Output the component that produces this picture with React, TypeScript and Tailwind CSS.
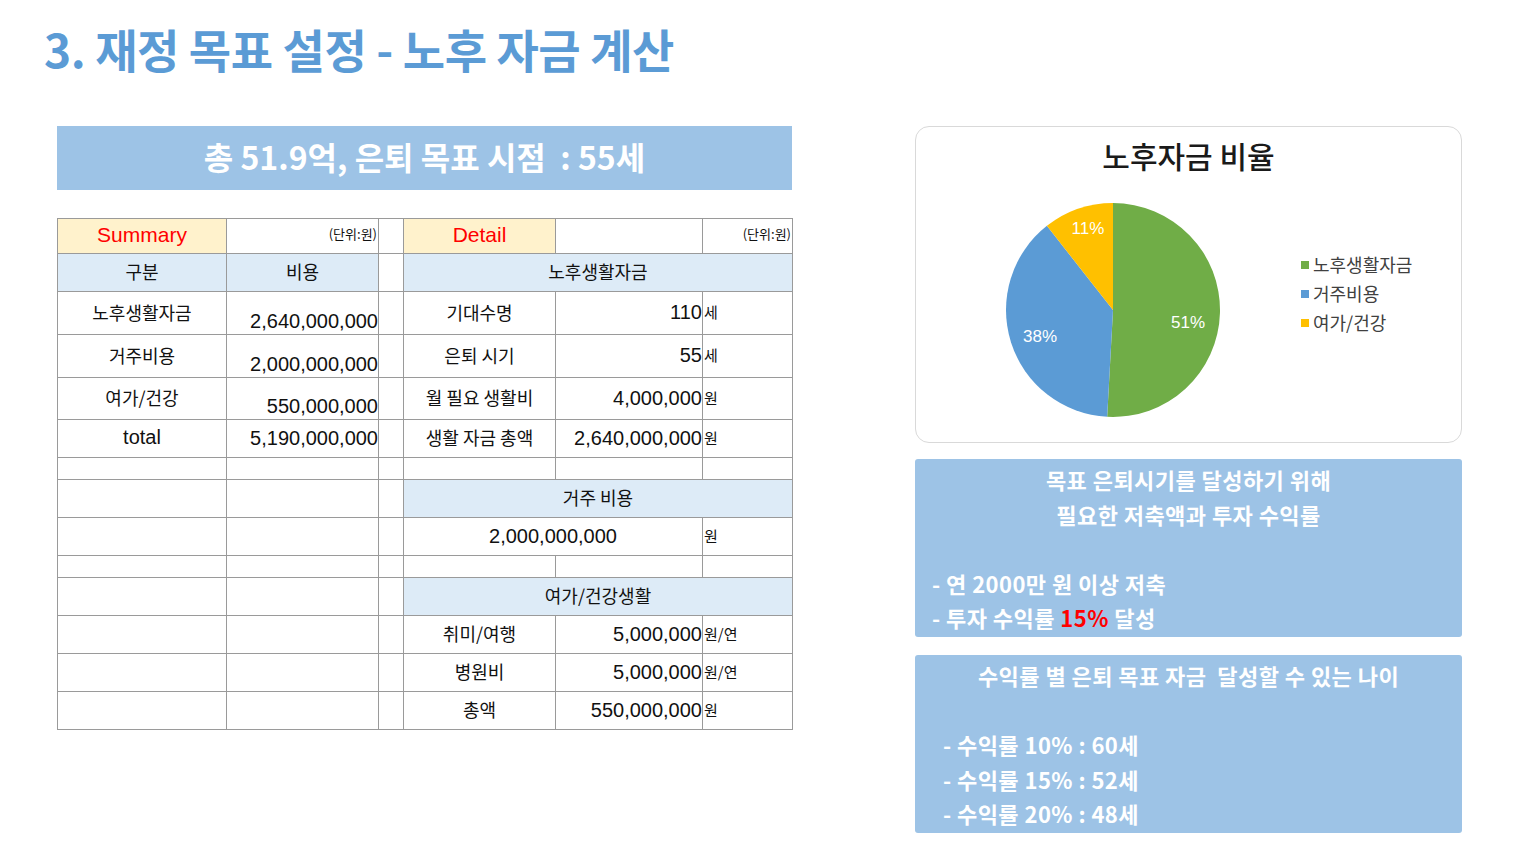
import React from 'react';

const KR = "font-['Noto_Sans_CJK_KR',sans-serif]";
const NUM = "font-['Liberation_Sans','Noto_Sans_CJK_KR',sans-serif]";

const SLICES = [
  { label: '노후생활자금', value: 2640, color: '#70ad47' },
  { label: '거주비용', value: 2000, color: '#5b9bd5' },
  { label: '여가/건강', value: 550, color: '#ffc000' },
];

function slicePath(cx: number, cy: number, r: number, from: number, to: number) {
  const a0 = from * Math.PI * 2 - Math.PI / 2;
  const a1 = to * Math.PI * 2 - Math.PI / 2;
  const x0 = cx + r * Math.cos(a0);
  const y0 = cy + r * Math.sin(a0);
  const x1 = cx + r * Math.cos(a1);
  const y1 = cy + r * Math.sin(a1);
  const large = to - from > 0.5 ? 1 : 0;
  return `M${cx},${cy} L${x0},${y0} A${r},${r} 0 ${large} 1 ${x1},${y1} Z`;
}

function Pie() {
  const total = SLICES.reduce((s, x) => s + x.value, 0);
  let acc = 0;
  const paths = SLICES.map((s) => {
    const from = acc / total;
    acc += s.value;
    return { ...s, d: slicePath(115, 115, 107, from, acc / total) };
  });
  return (
    <svg width="230" height="230" viewBox="0 0 230 230">
      {paths.map((p) => (
        <path key={p.label} d={p.d} fill={p.color} />
      ))}
      <g fill="#ffffff" fontSize="17" fontFamily="Liberation Sans, sans-serif" textAnchor="middle">
        <text x="190" y="133">51%</text>
        <text x="42" y="147">38%</text>
        <text x="90" y="39">11%</text>
      </g>
    </svg>
  );
}

const cell = 'border border-[#9a9a9a] p-0';
const yellow = `${cell} bg-[#fff2cc] text-center text-[#ff0000] text-[21px] pb-[2px] ${NUM}`;
const blue = `${cell} bg-[#ddebf7] text-center text-[18px] pb-[3px]`;
const label = `${cell} text-center text-[18px] pb-[3px]`;
const num = `${cell} text-right text-[20px] pb-[2px] ${NUM}`;
const bottomNum = `${cell} text-right text-[20px] align-bottom pb-[3px] ${NUM}`;
const unit = `${cell} text-left text-[15px] pl-[1px] pb-[2px]`;
const unitTag = `${cell} text-right align-top text-[13px] leading-[16px] pr-[1px] pt-[7px]`;

function Blank({ n }: { n: number }) {
  return (
    <>
      {Array.from({ length: n }, (_, i) => (
        <td key={i} className={cell} />
      ))}
    </>
  );
}

function DataTable() {
  return (
    <table className={`mt-[28px] w-[735px] table-fixed border-collapse text-[#111] leading-[20px] ${KR}`}>
      <colgroup>
        <col className="w-[169px]" />
        <col className="w-[152px]" />
        <col className="w-[25px]" />
        <col className="w-[152px]" />
        <col className="w-[147px]" />
        <col className="w-[90px]" />
      </colgroup>
      <tbody>
        <tr className="h-[35px]">
          <td className={yellow}>Summary</td>
          <td className={unitTag}>(단위:원)</td>
          <td className={cell} />
          <td className={yellow}>Detail</td>
          <td className={cell} />
          <td className={unitTag}>(단위:원)</td>
        </tr>
        <tr className="h-[38px]">
          <td className={blue}>구분</td>
          <td className={blue}>비용</td>
          <td className={cell} />
          <td className={blue} colSpan={3}>노후생활자금</td>
        </tr>
        <tr className="h-[43px]">
          <td className={label}>노후생활자금</td>
          <td className={bottomNum}>2,640,000,000</td>
          <td className={cell} />
          <td className={label}>기대수명</td>
          <td className={num}>110</td>
          <td className={unit}>세</td>
        </tr>
        <tr className="h-[43px]">
          <td className={label}>거주비용</td>
          <td className={bottomNum}>2,000,000,000</td>
          <td className={cell} />
          <td className={label}>은퇴 시기</td>
          <td className={num}>55</td>
          <td className={unit}>세</td>
        </tr>
        <tr className="h-[42px]">
          <td className={label}>여가/건강</td>
          <td className={bottomNum}>550,000,000</td>
          <td className={cell} />
          <td className={label}>월 필요 생활비</td>
          <td className={num}>4,000,000</td>
          <td className={unit}>원</td>
        </tr>
        <tr className="h-[38px]">
          <td className={`${label} ${NUM} text-[20px]`}>total</td>
          <td className={num}>5,190,000,000</td>
          <td className={cell} />
          <td className={label}>생활 자금 총액</td>
          <td className={num}>2,640,000,000</td>
          <td className={unit}>원</td>
        </tr>
        <tr className="h-[22px]">
          <Blank n={6} />
        </tr>
        <tr className="h-[38px]">
          <Blank n={3} />
          <td className={blue} colSpan={3}>거주 비용</td>
        </tr>
        <tr className="h-[38px]">
          <Blank n={3} />
          <td className={`${cell} text-center text-[20px] pb-[2px] ${NUM}`} colSpan={2}>2,000,000,000</td>
          <td className={unit}>원</td>
        </tr>
        <tr className="h-[22px]">
          <Blank n={6} />
        </tr>
        <tr className="h-[38px]">
          <Blank n={3} />
          <td className={blue} colSpan={3}>여가/건강생활</td>
        </tr>
        <tr className="h-[38px]">
          <Blank n={3} />
          <td className={label}>취미/여행</td>
          <td className={num}>5,000,000</td>
          <td className={unit}>원/연</td>
        </tr>
        <tr className="h-[38px]">
          <Blank n={3} />
          <td className={label}>병원비</td>
          <td className={num}>5,000,000</td>
          <td className={unit}>원/연</td>
        </tr>
        <tr className="h-[38px]">
          <Blank n={3} />
          <td className={label}>총액</td>
          <td className={num}>550,000,000</td>
          <td className={unit}>원</td>
        </tr>
      </tbody>
    </table>
  );
}

function ChartCard() {
  return (
    <div className="h-[317px] rounded-[14px] border border-[#d9d9d9] bg-white">
      <h2 className="pt-[8px] text-center text-[30px] leading-[40px] text-[#1a1a1a] font-medium">노후자금 비율</h2>
      <div className="mt-[20px] flex items-start">
        <div className="ml-[82px]">
          <Pie />
        </div>
        <ul className="ml-[73px] mt-[55px] text-[18px] leading-[29px] text-[#404040]">
          {SLICES.map((s) => (
            <li key={s.label} className="flex items-center gap-[4px]">
              <span className="h-[8px] w-[8px]" style={{ backgroundColor: s.color }} />
              {s.label}
            </li>
          ))}
        </ul>
      </div>
    </div>
  );
}

export default function App() {
  return (
    <div className={`h-[855px] w-[1520px] overflow-hidden bg-white ${KR}`}>
      <h1 className="pl-[44px] pt-[25px] text-[46px] leading-[46px] font-bold tracking-[-0.01em] text-[#5b9bd5]">
        3. 재정 목표 설정 - 노후 자금 계산
      </h1>
      <div className="mt-[55px] flex items-start">
        <div className="ml-[57px] w-[735px]">
          <div className="flex h-[64px] items-center justify-center bg-[#9dc3e6] pb-[5px] text-[32px] font-bold text-white">
            총 51.9억, 은퇴 목표 시점 &nbsp;: 55세
          </div>
          <DataTable />
        </div>
        <div className="ml-[123px] flex w-[547px] flex-col">
          <ChartCard />
          <div className="mt-[16px] h-[178px] rounded-[3px] bg-[#9dc3e6] pt-[3px] text-[22px] leading-[34.5px] font-bold tracking-[0.02em] text-white">
            <p className="text-center">목표 은퇴시기를 달성하기 위해</p>
            <p className="text-center">필요한 저축액과 투자 수익률</p>
            <p className="h-[34.5px]" />
            <p className="pl-[17px]">- 연 2000만 원 이상 저축</p>
            <p className="pl-[17px]">
              - 투자 수익률 <span className="text-[#ff0000]">15%</span> 달성
            </p>
          </div>
          <div className="mt-[18px] h-[178px] rounded-[3px] bg-[#9dc3e6] pt-[3px] text-[22px] leading-[34.5px] font-bold tracking-[0.02em] text-white">
            <p className="text-center">수익률 별 은퇴 목표 자금 &nbsp;달성할 수 있는 나이</p>
            <p className="h-[34.5px]" />
            <p className="pl-[28px]">- 수익률 10% : 60세</p>
            <p className="pl-[28px]">- 수익률 15% : 52세</p>
            <p className="pl-[28px]">- 수익률 20% : 48세</p>
          </div>
        </div>
      </div>
    </div>
  );
}
